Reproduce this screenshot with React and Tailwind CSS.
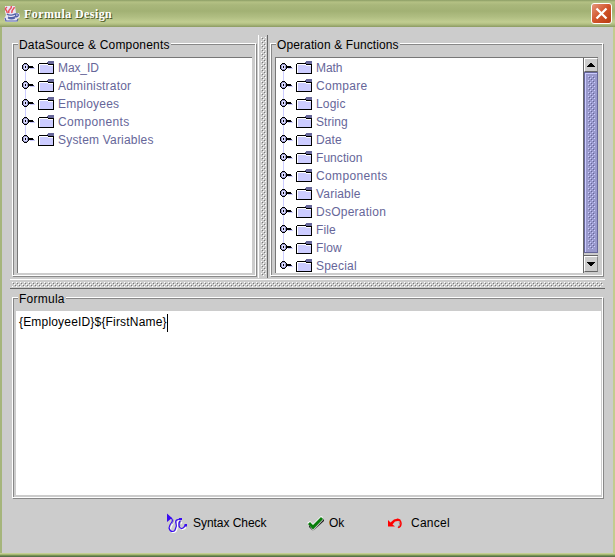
import React from "react";

const sources = [
  ["Max_ID", "tracking-[-0.1px]"],
  ["Administrator", "tracking-[0.2px]"],
  ["Employees", "tracking-[0.22px]"],
  ["Components", "tracking-[0.35px]"],
  ["System Variables", "tracking-[0.2px]"],
];
const operations = [
  ["Math", "tracking-[-0.1px]"],
  ["Compare", "tracking-[0.3px]"],
  ["Logic", "tracking-[0.2px]"],
  ["String", "tracking-[0.05px]"],
  ["Date", "tracking-[0.1px]"],
  ["Function", "tracking-[0.05px]"],
  ["Components", "tracking-[0.35px]"],
  ["Variable", "tracking-[0.2px]"],
  ["DsOperation", "tracking-[0.25px]"],
  ["File", "tracking-[0.1px]"],
  ["Flow", "tracking-[0.1px]"],
  ["Special", "tracking-[0.2px]"],
];

function Bumps({ id, light, dark, className }) {
  return (
    <svg className={className} shapeRendering="crispEdges">
      <defs>
        <pattern id={id} width="4" height="4" patternUnits="userSpaceOnUse">
          <path fill={light} d="M0 0h1v1H0zM2 2h1v1H2z" />
          <path fill={dark} d="M1 1h1v1H1zM3 3h1v1H3z" />
        </pattern>
      </defs>
      <rect width="100%" height="100%" fill={`url(#${id})`} />
    </svg>
  );
}

function Handle({ first, last }) {
  return (
    <svg className="block h-[18px] w-[13px] shrink-0" viewBox="0 0 13 18" shapeRendering="crispEdges">
      {!first && <path fill="#ccccff" d="M3 0h1v8H3z" />}
      {!last && <path fill="#ccccff" d="M3 8h1v10H3z" />}
      <path fill="#000" d="M2 4h3v1H2zM1 5h5v1H1zM0 6h7v4H0zM1 10h5v1H1zM2 11h3v1H2z" />
      <path fill="#9999cc" d="M2 5h3v1H2zM1 6h5v4H1zM2 10h3v1H2z" />
      <path fill="#ddddff" d="M2 6h3v4H2z" />
      <path fill="#000" d="M3 7h1v2H3zM7 7h1v2H7zM8 7h3v2H8z" />
      <path fill="#333355" d="M11 8h1v1h-1z" />
      <path fill="#ccccff" d="M8 9h5v1H8z" />
    </svg>
  );
}

function Folder() {
  return (
    <svg className="ml-[3px] block h-[18px] w-4 shrink-0" viewBox="0 0 16 18" shapeRendering="crispEdges">
      <path fill="#ccccff" d="M1 5h14v9H1z" />
      <path fill="#fff" d="M1 5h9v1H1zM1 6h1v8H1zM10 6h5v1h-5z" />
      <path fill="#000" d="M1 4h9v1H1zM0 5h1v10H0zM0 14h16v1H0zM15 5h1v10h-1zM10 5h6v1h-6z" />
      <path fill="#666699" d="M10 2h6v1h-6zM9 3h7v1H9zM10 4h6v1h-6z" />
    </svg>
  );
}

function Tree({ rows }) {
  return (
    <ul className="pt-px pl-1">
      {rows.map(([name, tracking], i) => (
        <li key={name} className="flex h-[18px] items-center">
          <Handle first={i === 0} last={i === rows.length - 1} />
          <Folder />
          <span className={`ml-1 leading-[18px] whitespace-nowrap text-[#666699] ${tracking}`}>{name}</span>
        </li>
      ))}
    </ul>
  );
}

function Group({ title, tracking, className, children }) {
  return (
    <section className={`flex flex-col border border-white shadow-[1px_1px_0_#888,inset_1px_1px_0_#888] ${className}`}>
      <h2 className={`-mt-[6px] ml-[5px] h-[14px] self-start bg-[#cccccc] px-px leading-[14px] ${tracking}`}>{title}</h2>
      {children}
    </section>
  );
}

function ScrollBar() {
  return (
    <div className="flex w-[15px] shrink-0 flex-col border-l border-[#666] bg-[#cccccc] pb-px">
      <div className="flex h-[14px] items-center justify-center border border-t-white border-r-[#888] border-b-[#666] border-l-white">
        <svg className="h-1 w-[8px]" viewBox="0 0 8 4" shapeRendering="crispEdges"><path d="M3 0h2v1H3zM2 1h4v1H2zM1 2h6v1H1zM0 3h8v1H0z" /></svg>
      </div>
      <div className="h-[181px] border border-[#666699] bg-[#9999cc] py-[3px] pr-[2px] pl-[3px] shadow-[inset_1px_1px_0_#ccccff]">
        <Bumps id="thumb" light="#ccccff" dark="#666699" className="block h-full w-full" />
      </div>
      <div className="h-[3px] border-b border-[#666]" />
      <div className="flex flex-1 items-center justify-center border border-t-white border-r-[#888] border-b-[#666] border-l-white">
        <svg className="h-1 w-[8px]" viewBox="0 0 8 4" shapeRendering="crispEdges"><path d="M0 0h8v1H0zM1 1h6v1H1zM2 2h4v1H2zM3 3h2v1H3z" /></svg>
      </div>
    </div>
  );
}

function JavaCup() {
  return (
    <svg className="ml-1 h-4 w-4" viewBox="0 0 16 16">
      <path fill="#e9e6f5" d="M1 0h10l1 7h3l1 4-3 2v3H2l-2-3 2-4-1-3z" />
      <path fill="none" stroke="#e8505c" strokeWidth="1.5" d="M7 0c2 3-4 3-2 7M3 1C-1 4 4 4 3 7M10 1c1 2-3 2-2 6" />
      <path fill="none" stroke="#5362a8" strokeWidth="1.2" d="M3 8c2 2 7 1 8 0l1 2c-2 2-6 2-8 1M4 12c2 1 5 1 7 0M1 12l1 3h11l1-2M11 8c5-1 4 3 0 3" />
    </svg>
  );
}

function SyntaxIcon() {
  return (
    <svg className="h-5 w-[21px]" viewBox="0 0 21 20">
      <g fill="none" stroke="#fff" strokeWidth="1.2" transform="translate(1 1)">
        <path d="M4 5.5Q7 7 5 9.500T2.500 15Q3 18.500 5.500 18.500T9 15Q9.500 12 9.500 9T13 6.500" />
        <path d="M14 8Q11.500 10 12 14Q14 17 18 13.500" />
      </g>
      <g fill="none" stroke="#8888a8" strokeWidth="1.2">
        <path d="M6 6.500Q7 8 5.500 10.500M13 8.500Q12.500 10 13 13.500" />
      </g>
      <g fill="none" stroke="#3a0cf0" strokeWidth="1.2">
        <path d="M4 5Q6.500 7 4.500 9.500T2 15Q3 18.500 5.500 18.500T8.500 15.500Q10 13 9 10.500T10 6.800L13 6" />
        <path d="M13.500 7.500Q11.500 9 12 13Q13 16 15 15.500T18 12.500" />
      </g>
      <path fill="#3a0cf0" d="M0 .5l5 4.500-5 4zM12 5h3v2h-3zM17.500 11h2.500v2.500h-2.500z" />
    </svg>
  );
}

export default function App() {
  return (
    <div className="flex h-[557px] w-[615px] flex-col overflow-hidden bg-[#cccccc] font-['Liberation_Sans',Arial,sans-serif] text-[12px] text-black">
      <header className="flex h-[27px] shrink-0 items-center bg-[linear-gradient(#8b9d65_0,#b4c184_2px,#a9b77b_5px,#a2b174_11px,#b0be82_17px,#c1cd91_22px,#b4c184_24px,#8b9a62_27px)]">
        <JavaCup />
        <h1 className="mt-px ml-1 font-['Liberation_Serif',serif] text-[12px] font-bold tracking-[0.42px] text-white [text-shadow:1px_1px_0_#4c5724]">Formula Design</h1>
        <button className="mr-[3px] ml-auto flex h-[21px] w-[21px] items-center justify-center rounded-[3px] border border-white bg-[linear-gradient(135deg,#e5977c,#d2542b_50%,#b83c12)]">
          <svg className="h-[13px] w-[13px]" viewBox="0 0 13 13"><path d="M1.500 1.500l10 10M11.500 1.500l-10 10" stroke="#fff" strokeWidth="2.3" /></svg>
        </button>
      </header>
      <main className="flex flex-1 flex-col border-r-2 border-l-2 border-r-[#c2cc8e] border-l-[#a5b57b] pt-2 pr-2 pl-2">
        <div className="flex h-[243px] pl-[2px]">
          <Group title="DataSource & Components" tracking="tracking-[0.2px]" className="mt-2 mb-[2px] w-[244px] shrink-0">
            <div className="mt-[5px] mr-[3px] mb-0.5 ml-1 flex-1 border-t border-l border-[#777] bg-white">
              <Tree rows={sources} />
            </div>
          </Group>
          <div className="ml-[2px] w-[10px] shrink-0 border-r border-l border-r-[#666] border-l-white py-[2px] pr-px pl-[2px]">
            <Bumps id="vertical" light="#fff" dark="#777" className="block h-full w-[5px]" />
          </div>
          <Group title="Operation & Functions" tracking="tracking-[0.11px]" className="mt-2 mb-[2px] ml-[2px] w-[333px] shrink-0">
            <div className="mx-1 mt-[5px] mb-0.5 flex min-h-0 flex-1 overflow-hidden border-t border-l border-[#777] bg-white">
              <div className="min-w-0 flex-1"><Tree rows={operations} /></div>
              <ScrollBar />
            </div>
          </Group>
        </div>
        <div className="mt-px h-[10px] border-t border-b border-t-white border-b-[#666] px-[2px] py-[2px]">
          <Bumps id="horizontal" light="#fff" dark="#777" className="block h-[5px] w-full" />
        </div>
        <Group title="Formula" tracking="tracking-[0.25px]" className="mt-2 ml-[2px] h-[201px] w-[591px]">
          <div className="mt-[5px] mr-px mb-0.5 ml-[3px] flex-1 bg-white pt-[2px] pl-[3px]">
            <span className="inline-block h-[18px] border-r border-black leading-[17px] tracking-[0.18px]">{"{EmployeeID}${FirstName}"}</span>
          </div>
        </Group>
        <footer className="mt-[15px] flex h-5 items-center pl-[157px]">
          <button className="flex w-[140px] items-center gap-[5px] tracking-[-0.05px]"><SyntaxIcon />Syntax Check</button>
          <button className="flex w-[80px] items-center gap-[5px]">
            <svg className="mt-px h-[15px] w-[17px]" viewBox="0 0 17 15"><path fill="#fff" d="M0 7l3-2 3 3L14 0l2 1-9 10z" /><path fill="#222" d="M2 9l4 6L17 3v2L6 15 2 11z" /><path fill="#087d0b" d="M1 8l2-2 3 3 8-8 2 2L6 13.500z" /></svg>Ok
          </button>
          <button className="flex items-center gap-[8px] tracking-[0.25px]">
            <svg className="h-[12px] w-4" viewBox="0 0 16 12"><path fill="#f00" d="M1 3l2.500 2.500L7 2.500l4-1 3 1.500-3 1-3 .5-2.500 3L8 9.500H1z" /><path d="M10 2.500q4 .5 4 4t-3 4" fill="none" stroke="#f00" strokeWidth="1.500" /><path d="M12 4.500q2 3-1 6" fill="none" stroke="#9b6565" strokeWidth=".8" /></svg>Cancel
          </button>
        </footer>
      </main>
      <div className="h-1 shrink-0 bg-[linear-gradient(#c4ce92_0_1px,#a5b875_1px_2px,#779052_2px_3px,#55704a_3px)]" />
    </div>
  );
}
